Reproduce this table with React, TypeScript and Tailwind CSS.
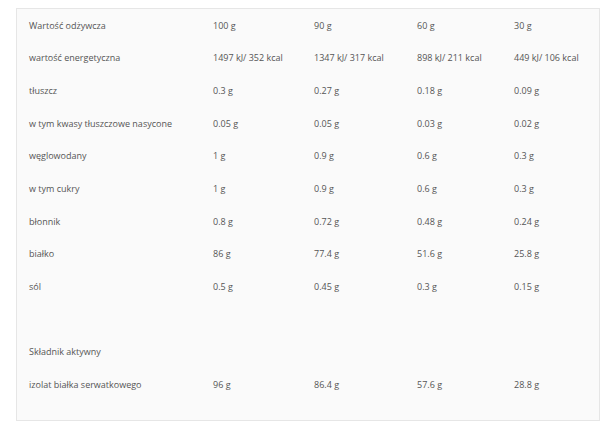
import React from "react";

const rows: (string[] | null)[] = [
  ["Wartość odżywcza", "100 g", "90 g", "60 g", "30 g"],
  ["wartość energetyczna", "1497 kJ/ 352 kcal", "1347 kJ/ 317 kcal", "898 kJ/ 211 kcal", "449 kJ/ 106 kcal"],
  ["tłuszcz", "0.3 g", "0.27 g", "0.18 g", "0.09 g"],
  ["w tym kwasy tłuszczowe nasycone", "0.05 g", "0.05 g", "0.03 g", "0.02 g"],
  ["węglowodany", "1 g", "0.9 g", "0.6 g", "0.3 g"],
  ["w tym cukry", "1 g", "0.9 g", "0.6 g", "0.3 g"],
  ["błonnik", "0.8 g", "0.72 g", "0.48 g", "0.24 g"],
  ["białko", "86 g", "77.4 g", "51.6 g", "25.8 g"],
  ["sól", "0.5 g", "0.45 g", "0.3 g", "0.15 g"],
  null,
  ["Składnik aktywny", "", "", "", ""],
  ["izolat białka serwatkowego", "96 g", "86.4 g", "57.6 g", "28.8 g"],
];

export default function App() {
  return (
    <div className="w-[615px] h-[430px] bg-white pt-[8px] pl-[16px]" style={{ fontFamily: '"Open Sans", "Noto Sans", sans-serif' }}>
      <div className="w-[584px] h-[413px] border border-[#e6e6e6] bg-[#fafafa] px-[12px] text-[9px] text-[#555555]">
        {rows.map((r, i) => (
          <div key={i} className="grid grid-cols-[184px_101px_103px_97px_1fr] h-[32.7px] items-center">
            {r ? r.map((c, j) => <div key={j} className="whitespace-nowrap">{c}</div>) : <div />}
          </div>
        ))}
      </div>
    </div>
  );
}
